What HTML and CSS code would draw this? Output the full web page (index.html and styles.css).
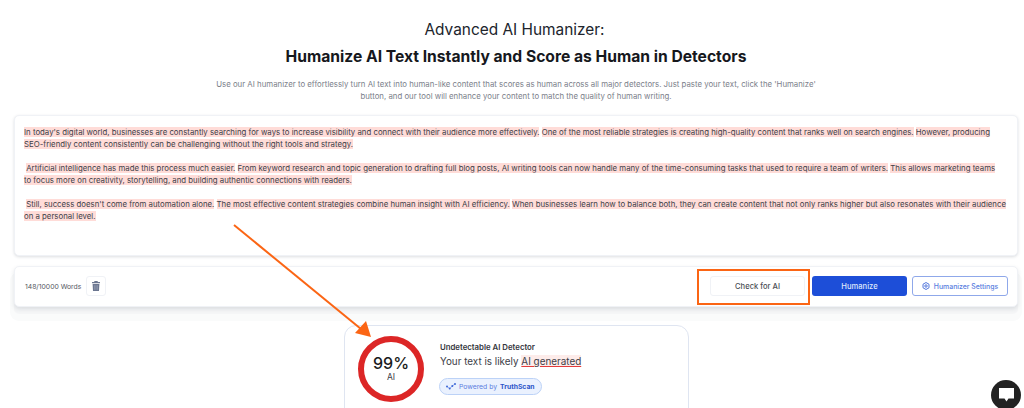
FILE: index.html
```html
<!DOCTYPE html>
<html lang="en">
<head>
  <meta charset="UTF-8" />
  <title>Advanced AI Humanizer</title>
  <link rel="stylesheet" href="styles.css">
</head>
<body>
  <header class="intro">
    <h1 class="introTitle">Advanced AI Humanizer:</h1>
    <h2 class="introSub">Humanize AI Text Instantly and Score as Human in Detectors</h2>
    <p class="introText">Use our AI humanizer to effortlessly turn AI text into human-like content that scores as human across all major detectors. Just paste your text, click the 'Humanize'<br>button, and our tool will enhance your content to match the quality of human writing.</p>
  </header>

  <!-- Editor -->
  <section class="editor">
    <p><mark>In today's digital world, businesses are constantly searching for ways to increase visibility and connect with their audience more effectively.</mark> <mark>One of the most reliable strategies is creating high-quality content that ranks well on search engines.</mark> <mark>However, producing</mark><br><mark>SEO-friendly content consistently can be challenging without the right tools and strategy.</mark></p>
    <p>&nbsp;<mark>Artificial intelligence has made this process much easier.</mark> <mark>From keyword research and topic generation to drafting full blog posts, AI writing tools can now handle many of the time-consuming tasks that used to require a team of writers.</mark> <mark>This allows marketing teams</mark><br><mark>to focus more on creativity, storytelling, and building authentic connections with readers.</mark></p>
    <p>&nbsp;<mark>Still, success doesn't come from automation alone.</mark> <mark>The most effective content strategies combine human insight with AI efficiency.</mark> <mark>When businesses learn how to balance both, they can create content that not only ranks higher but also resonates with their audience</mark><br><mark>on a personal level.</mark></p>
  </section>

  <!-- Toolbar -->
  <section class="toolbar">
    <div class="wordCount">
      <span>148/10000 Words</span>
      <button class="trashButton" aria-label="Clear">
        <svg width="8" height="10" viewBox="0 0 8 10"><path d="M2.5 0h3l.4 1H8v1.2H0V1h2.1z M.6 3h6.8l-.4 7H1z" fill="#6b7690"/><path d="M2.6 4.2v4.6M4 4.2v4.6M5.4 4.2v4.6" stroke="#a9b0c0" stroke-width=".5"/></svg>
      </button>
    </div>
    <div class="actions">
      <button class="btn btnCheck">Check for AI</button>
      <button class="btn btnPrimary">Humanize</button>
      <button class="btn btnSettings">
        <svg width="8" height="8" viewBox="0 0 8 8" fill="none" stroke="#3f68d8" stroke-width=".9"><circle cx="4" cy="4" r="1.2"/><path d="M4 .5l3 1.75v3.5L4 7.5l-3-1.75v-3.5z"/></svg>
        Humanizer Settings
      </button>
    </div>
  </section>

  <!-- Score -->
  <section class="scoreCard">
    <div class="scoreRing">
      <strong>99%</strong>
      <span>AI</span>
    </div>
    <div class="scoreInfo">
      <h3>Undetectable AI Detector</h3>
      <p>Your text is likely <u>AI generated</u></p>
      <span class="poweredBy">
        <svg width="10" height="7" viewBox="0 0 10 7" fill="#3f68d8"><circle cx="1" cy="3.5" r="1"/><circle cx="3.7" cy="5.6" r="1"/><circle cx="6.3" cy="3" r="1"/><circle cx="9" cy="1" r="1"/><path d="M1 3.5l2.7 2.1L6.3 3 9 1" fill="none" stroke="#3f68d8" stroke-width=".5"/></svg>
        Powered by <b>TruthScan</b>
      </span>
    </div>
  </section>

  <!-- Annotations drawn on top of the screenshot -->
  <div class="checkHighlight"></div>
  <svg class="arrow" width="150" height="120" viewBox="0 0 150 120">
    <path d="M1 1L128 105" stroke="#fb6514" stroke-width="2" fill="none"/>
    <path d="M138 113L122 109L133 97z" fill="#fb6514"/>
  </svg>

  <button class="chatBubble" aria-label="Chat">
    <svg width="15" height="14" viewBox="0 0 15 14"><path d="M0 0h15v10.5H9.5L7.5 13.5 5.5 10.5H0z" fill="#fff"/></svg>
  </button>
</body>
</html>
```
FILE: styles.css
```css
html, body {
  height: 408px;
  overflow: hidden;
}

body {
  position: relative;
  margin: 0;
  padding: 0 6px 0 14px;
  background-color: #fff;
  font-family: Inter, "Noto Sans", sans-serif;
  color: #20242c;
}

.intro {
  text-align: center;
  padding-top: 20px;
}

.introTitle {
  margin: 0 3px 0 0;
  font-size: 15.4px;
  line-height: 20px;
  font-weight: 400;
}

.introSub {
  margin: 7px 0 0;
  font-size: 15.65px;
  line-height: 20px;
  font-weight: 700;
  color: #16181d;
}

.introText {
  margin: 11px 0 0;
  font-size: 7.82px;
  line-height: 12.4px;
  color: #7b808a;
}

.editor {
  box-sizing: border-box;
  height: 141px;
  margin-top: 12px;
  padding: 11.5px 9px;
  background-color: #fff;
  border: 1px solid #f0f2f6;
  border-radius: 5px;
  box-shadow: 0 1px 3px rgba(60,70,90,0.18);
  font-size: 7.82px;
  line-height: 11.9px;
  color: #3d4048;
  white-space: nowrap;
}

.editor p {
  margin: 0 0 11.9px;
}

.editor mark {
  background-color: #ffdcd8;
  color: inherit;
}

.toolbar {
  box-sizing: border-box;
  display: flex;
  justify-content: space-between;
  align-items: center;
  height: 41px;
  margin-top: 10px;
  padding: 0 9px 0 10px;
  background-color: #fff;
  border: 1px solid #f0f2f6;
  border-radius: 5px;
  box-shadow: 0 2px 4px rgba(60,70,90,0.14), 0 7px 0 0 #f5f6f7, 0 10px 0 4px #fafbfb;
}

.wordCount {
  display: flex;
  align-items: center;
  gap: 5px;
  font-size: 6.8px;
  color: #55585f;
}

.trashButton {
  display: flex;
  align-items: center;
  justify-content: center;
  width: 20px;
  height: 20px;
  padding: 0;
  background-color: #fff;
  border: 1px solid #f0f2f6;
  border-radius: 3px;
}

.actions {
  display: flex;
  gap: 5px;
}

.btn {
  display: flex;
  align-items: center;
  justify-content: center;
  gap: 4px;
  height: 20px;
  padding: 0;
  border-radius: 3px;
  font-family: inherit;
  font-size: 7.6px;
  font-weight: 500;
}

.btnCheck {
  width: 95px;
  margin-right: 2px;
  background-color: #fff;
  border: 1px solid #f0f2f6;
  color: #4b4e55;
}

.btnPrimary {
  width: 95px;
  background-color: #1d4ed8;
  border: none;
  color: #dfe7fb;
}

.btnSettings {
  width: 96px;
  background-color: #fff;
  border: 1px solid #8fa8ea;
  color: #5a7ee0;
  font-size: 6.9px;
}

.scoreCard {
  box-sizing: border-box;
  display: flex;
  align-items: flex-start;
  gap: 16px;
  width: 345px;
  height: 96px;
  margin: 18px 0 0 330px;
  padding: 10px 13px 0;
  background-color: #fff;
  border: 1px solid #dfe5f1;
  border-radius: 12px;
}

.scoreRing {
  box-sizing: border-box;
  display: flex;
  flex-direction: column;
  align-items: center;
  justify-content: center;
  flex: none;
  width: 66px;
  height: 66px;
  border: 6px solid #dc2626;
  border-radius: 50%;
}

.scoreRing strong {
  font-size: 16px;
  line-height: 17px;
  font-weight: 500;
  color: #1a1c20;
}

.scoreRing span {
  font-size: 8.5px;
  line-height: 11px;
  color: #3d4048;
}

.scoreInfo {
  padding-top: 6px;
}

.scoreInfo h3 {
  margin: 0;
  font-size: 7.8px;
  line-height: 10px;
  font-weight: 600;
  color: #33363d;
}

.scoreInfo p {
  margin: 2px 0 0;
  font-size: 9.9px;
  line-height: 14px;
  color: #3d4048;
}

.scoreInfo u {
  background-color: #fdecea;
  text-decoration-color: #e33b3b;
}

.poweredBy {
  display: flex;
  width: fit-content;
  align-items: center;
  gap: 3px;
  box-sizing: border-box;
  height: 17px;
  margin: 10px 0 0 -1px;
  padding: 0 6px;
  background-color: #eaf1fe;
  border: 1px solid #bcd2f7;
  border-radius: 9px;
  font-size: 6.8px;
  color: #5a7ee0;
}

.poweredBy b {
  color: #2c55c9;
}

.checkHighlight {
  position: absolute;
  left: 697px;
  top: 269px;
  width: 109px;
  height: 32px;
  border: 2px solid #fb6514;
}

.arrow {
  position: absolute;
  left: 233px;
  top: 224px;
}

.chatBubble {
  position: absolute;
  right: 3px;
  top: 380px;
  display: flex;
  align-items: center;
  justify-content: center;
  width: 30px;
  height: 30px;
  padding: 0;
  background-color: #222;
  border: none;
  border-radius: 50%;
}
```
